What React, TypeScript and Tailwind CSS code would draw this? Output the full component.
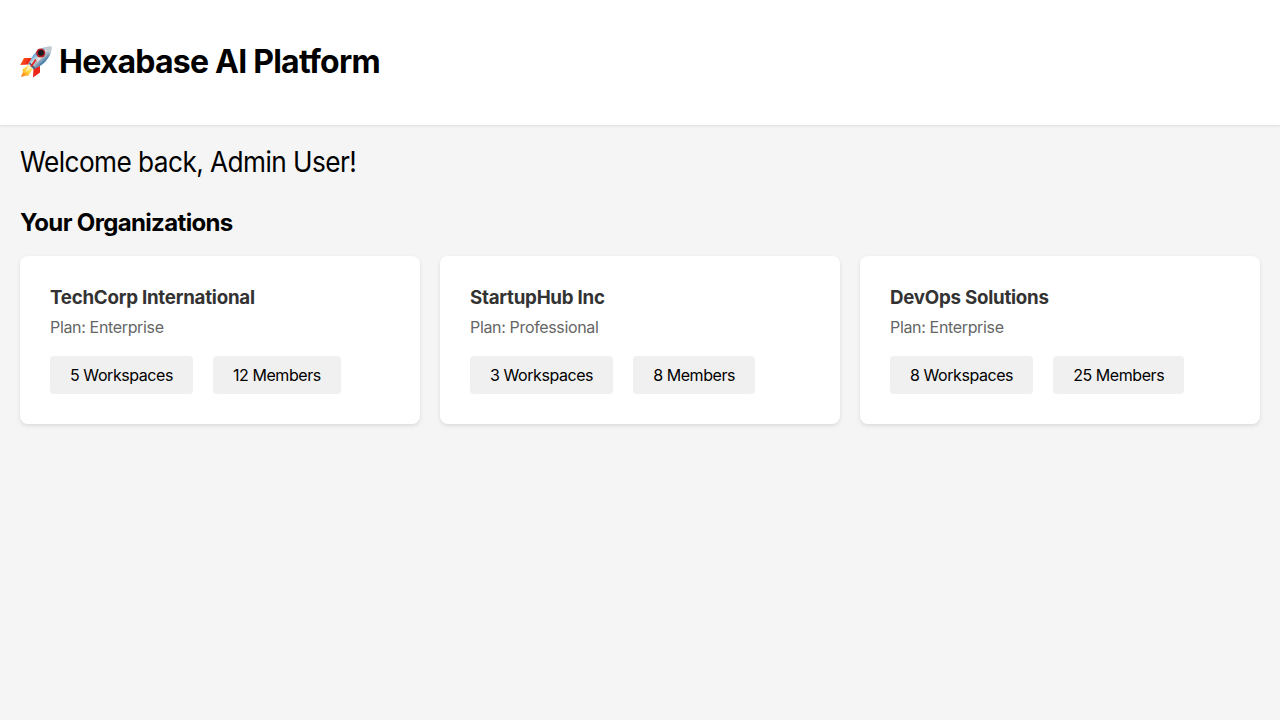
const orgs = [
  { name: "TechCorp International", plan: "Enterprise", workspaces: 5, members: 12 },
  { name: "StartupHub Inc", plan: "Professional", workspaces: 3, members: 8 },
  { name: "DevOps Solutions", plan: "Enterprise", workspaces: 8, members: 25 },
];

function Rocket() {
  return (
    <svg viewBox="0.5 0 32 32" className="h-8 w-8 shrink-0" aria-hidden="true">
      <defs>
        <linearGradient id="hull" x1="14" y1="5" x2="25" y2="17" gradientUnits="userSpaceOnUse">
          <stop offset="0" stopColor="#3479b3" />
          <stop offset="0.25" stopColor="#76b3dc" />
          <stop offset="0.5" stopColor="#d8dfe3" />
          <stop offset="0.75" stopColor="#8fa6b8" />
          <stop offset="1" stopColor="#286fa8" />
        </linearGradient>
        <linearGradient id="fin" x1="3" y1="12" x2="14" y2="18" gradientUnits="userSpaceOnUse">
          <stop offset="0" stopColor="#ff5a1c" />
          <stop offset="0.6" stopColor="#ed2316" />
          <stop offset="1" stopColor="#c91d14" />
        </linearGradient>
        <linearGradient id="flame" x1="11" y1="20" x2="3" y2="30" gradientUnits="userSpaceOnUse">
          <stop offset="0" stopColor="#fff29a" />
          <stop offset="0.6" stopColor="#ffc82e" />
          <stop offset="1" stopColor="#ff7b1c" />
        </linearGradient>
      </defs>
      <path d="M13 12 L4.5 12 L0.7 19 L9 18.5Z" fill="url(#fin)" />
      <path d="M20.5 20 L20.5 26.5 L13.5 31.5 L14 22Z" fill="#ed2419" />
      <path d="M9 19 L2.8 23.5 L3.6 25.6 L1.5 31 L6.5 29.5 L8.5 30 L13.5 23Z" fill="url(#flame)" />
      <path d="M9 20 L6 26 L12 22Z" fill="#fff5b4" />
      <path d="M32 0.5 C24 0.2 17.5 4.2 13.5 9.5 L8.5 18.2 L14 23.5 L22 19 C28 14.2 32.3 8 32 0.5Z" fill="url(#hull)" />
      <path d="M32 0.5 C28.5 0.4 25.5 1 23 2 C27 2.8 29.5 5.5 30.3 9 C31.4 6 32 3.3 32 0.5Z" fill="#c0cad0" />
      <path d="M17.5 15 L22.5 10.5" stroke="#edf0ef" strokeWidth="1.3" />
      <path d="M10 17 L15 22.5" stroke="#335069" strokeWidth="1.2" />
      <circle cx="21.2" cy="7" r="4.6" fill="#b51f24" />
      <circle cx="21.4" cy="6.8" r="2.9" fill="#171b22" />
      <path d="M16.5 13.5 L11.5 20.5" stroke="#e3241c" strokeWidth="1.7" />
    </svg>
  );
}

export default function App() {
  return (
    <div className="min-h-screen bg-[#f5f5f5] font-['Inter',sans-serif] text-base leading-[18px] text-black">
      <header className="flex h-[125px] items-center bg-white px-5 pb-0.5 shadow-[0_1px_3px_rgba(0,0,0,0.1)]">
        <Rocket />
        <h1 className="ml-[7px] text-[32px] leading-[38px] font-bold tracking-[-0.77px] whitespace-nowrap">Hexabase AI Platform</h1>
      </header>
      <main className="px-5 pt-5">
        <p className="origin-left scale-x-[0.937] text-[28px] leading-[34px] tracking-[-0.6px]">Welcome back, Admin User!</p>
        <h2 className="mt-[29px] text-2xl leading-[29px] font-bold tracking-[-0.65px]">Your Organizations</h2>
        <div className="mt-[19px] grid grid-cols-3 gap-5">
          {orgs.map((o) => (
            <section key={o.name} className="h-[168px] rounded-lg bg-white px-[30px] pt-[31px] shadow-[0_2px_4px_rgba(0,0,0,0.1)]">
              <h3 className="text-[18.72px] leading-[22px] font-bold tracking-[-0.24px] text-[#333]">{o.name}</h3>
              <p className="mt-[9px] tracking-[-0.34px] text-[#666]">Plan: {o.plan}</p>
              <div className="mt-5 flex gap-5">
                <span className="rounded bg-[#f0f0f0] px-5 py-[10px] tracking-[-0.43px]">{o.workspaces} Workspaces</span>
                <span className="rounded bg-[#f0f0f0] px-5 py-[10px] tracking-[-0.43px]">{o.members} Members</span>
              </div>
            </section>
          ))}
        </div>
      </main>
    </div>
  );
}
